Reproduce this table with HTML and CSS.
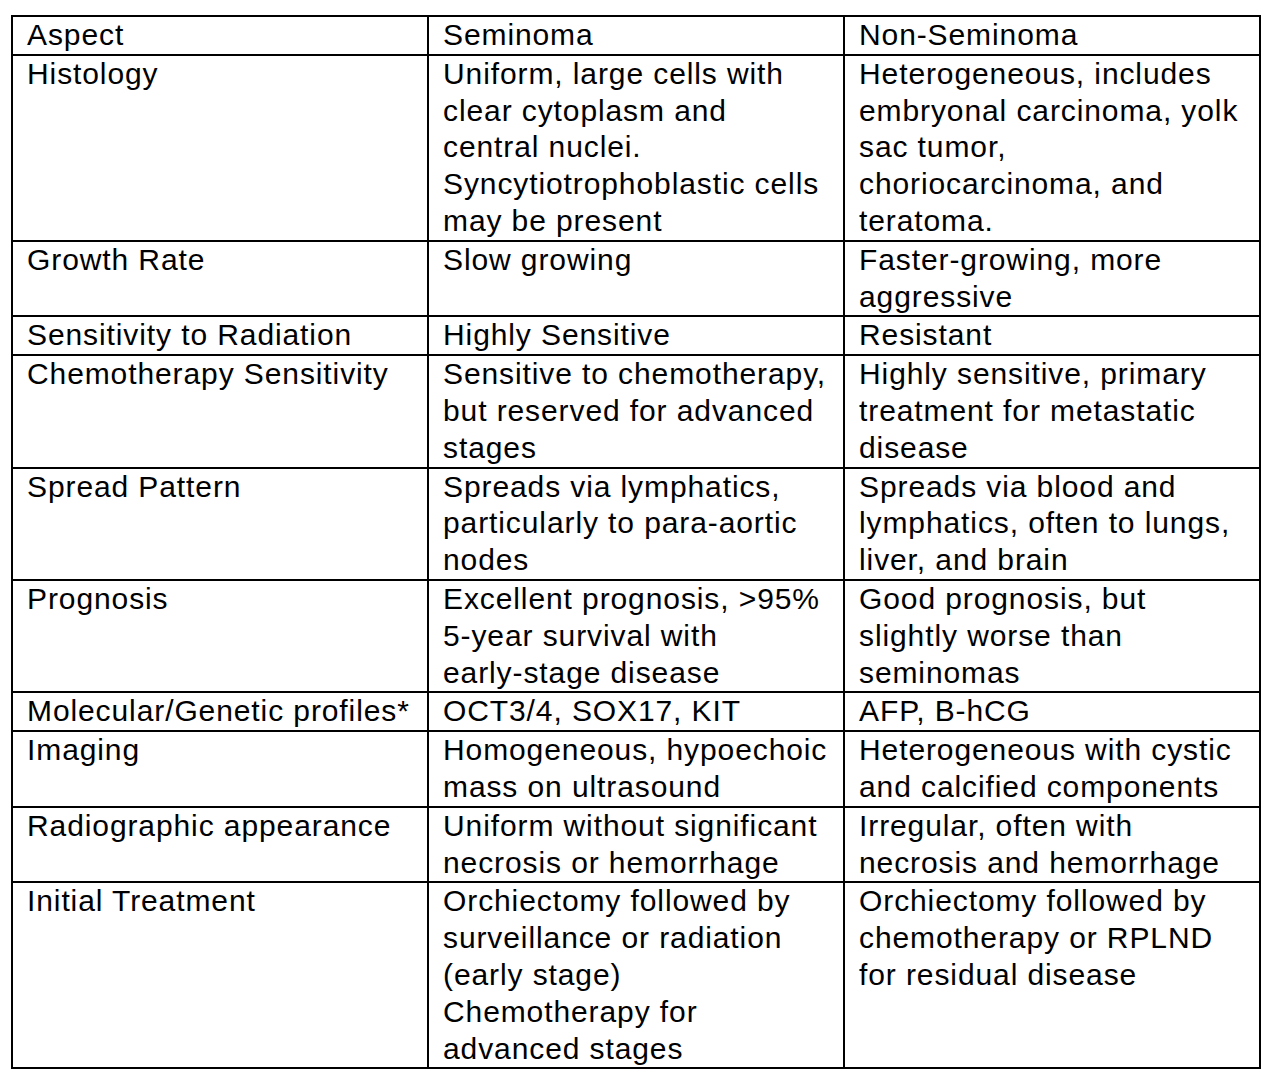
FILE: index.html
```html
<!DOCTYPE html>
<html lang="en">
<head>
<meta charset="utf-8">
<title>Seminoma vs Non-Seminoma</title>
<link rel="stylesheet" href="styles.css">
</head>
<body>
<table class="cmp">
  <colgroup><col class="c"><col class="c"><col class="c"></colgroup>
  <tr><td>Aspect</td><td>Seminoma</td><td>Non-Seminoma</td></tr>
  <tr><td>Histology</td><td>Uniform, large cells with clear cytoplasm and central nuclei.<br>Syncytiotrophoblastic cells may be present</td><td>Heterogeneous, includes embryonal carcinoma, yolk sac tumor,<br>choriocarcinoma, and teratoma.</td></tr>
  <tr><td>Growth Rate</td><td>Slow growing</td><td>Faster-growing, more aggressive</td></tr>
  <tr><td>Sensitivity to Radiation</td><td>Highly Sensitive</td><td>Resistant</td></tr>
  <tr><td>Chemotherapy Sensitivity</td><td>Sensitive to chemotherapy, but reserved for advanced stages</td><td>Highly sensitive, primary treatment for metastatic disease</td></tr>
  <tr><td>Spread Pattern</td><td>Spreads via lymphatics, particularly to para-aortic nodes</td><td>Spreads via blood and lymphatics, often to lungs, liver, and brain</td></tr>
  <tr><td>Prognosis</td><td>Excellent prognosis, &gt;95% 5-year survival with<br>early-stage disease</td><td>Good prognosis, but slightly worse than seminomas</td></tr>
  <tr><td>Molecular/Genetic profiles*</td><td>OCT3/4, SOX17, KIT</td><td>AFP, B-hCG</td></tr>
  <tr><td>Imaging</td><td>Homogeneous, hypoechoic mass on ultrasound</td><td>Heterogeneous with cystic and calcified components</td></tr>
  <tr><td>Radiographic appearance</td><td>Uniform without significant necrosis or hemorrhage</td><td>Irregular, often with necrosis and hemorrhage</td></tr>
  <tr><td>Initial Treatment</td><td>Orchiectomy followed by surveillance or radiation (early stage)<br>Chemotherapy for advanced stages</td><td>Orchiectomy followed by chemotherapy or RPLND for residual disease</td></tr>
</table>
</body>
</html>
```

FILE: styles.css
```css
html, body {
  margin: 0;
  padding: 0;
  background: #fff;
}
body {
  padding: 15px 0 0 11px;
  font-family: "Liberation Sans", Arial, Helvetica, sans-serif;
  color: #000;
}
.cmp {
  border-collapse: collapse;
  table-layout: fixed;
  width: 1250px;
  font-size: 30px;
  line-height: 36.8px;
  letter-spacing: 0.9px;
}
.cmp td {
  border: 2px solid #000;
  padding: 0 13px 0 14px;
  vertical-align: top;
  word-wrap: break-word;
}
```
